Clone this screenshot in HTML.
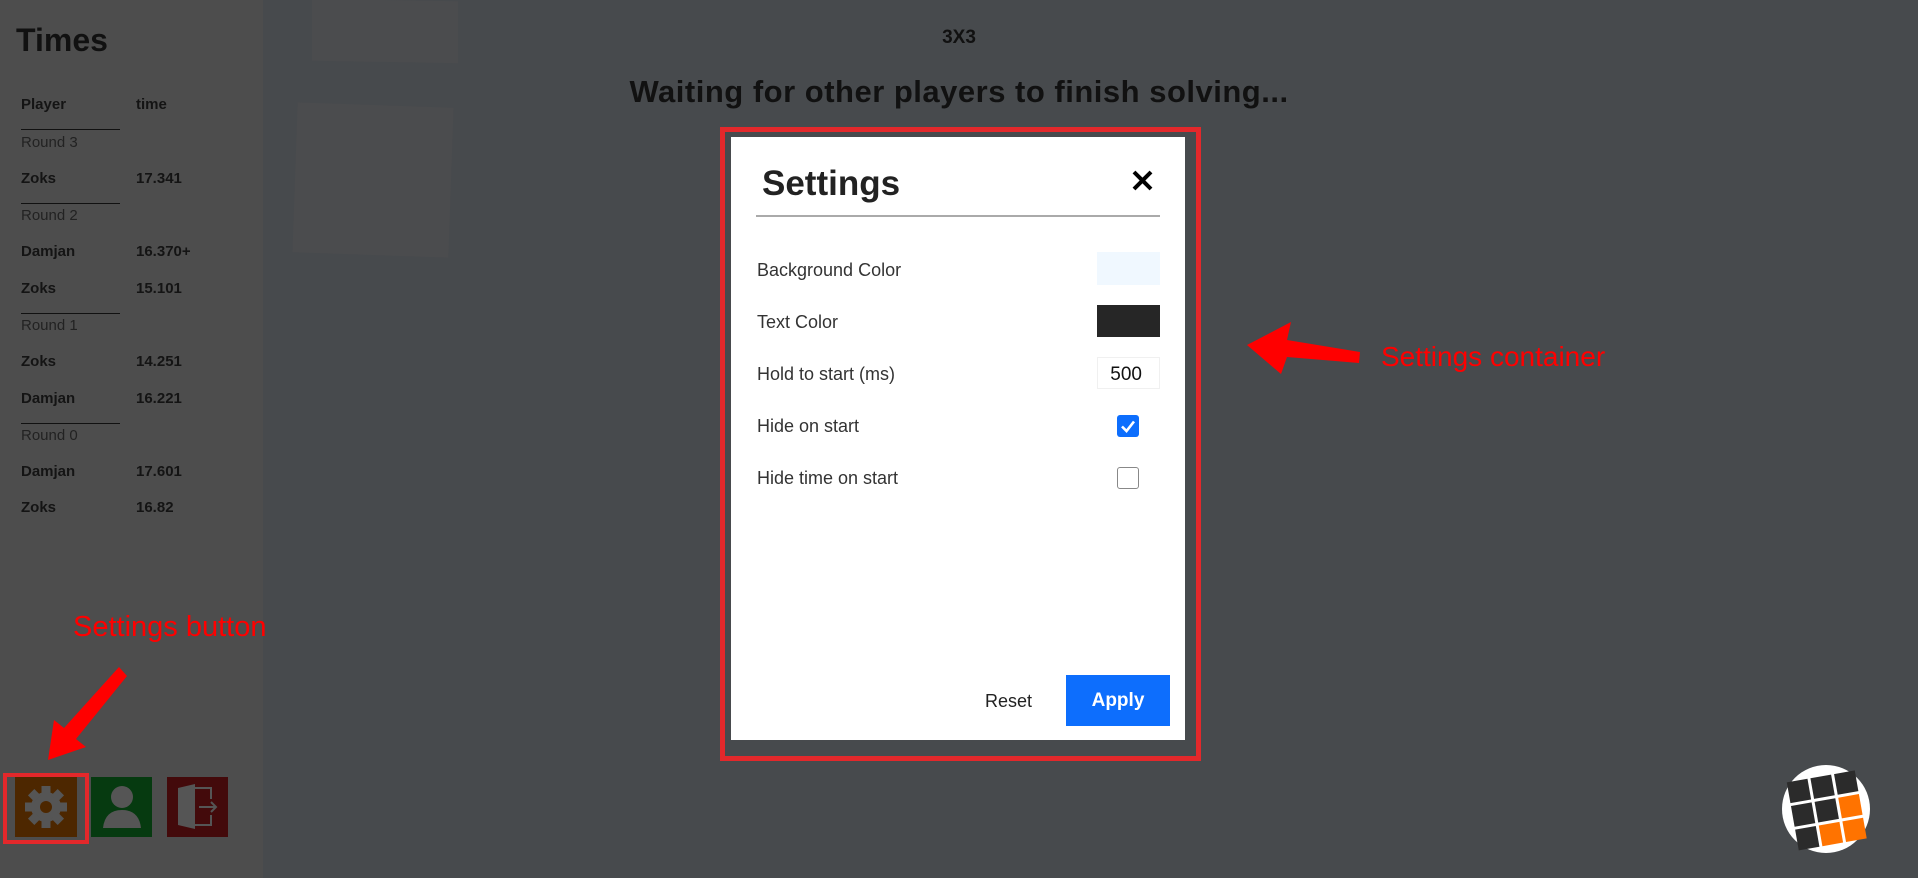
<!DOCTYPE html>
<html><head><meta charset="utf-8"><style>
*{margin:0;padding:0;box-sizing:border-box}
body{width:1918px;height:878px;overflow:hidden;background:#474a4d;font-family:"Liberation Sans","DejaVu Sans",sans-serif;position:relative}
.abs{position:absolute}
#left{left:0;top:0;width:263px;height:878px;background:#4d4d4d}
.t{position:absolute;font-size:15px;color:#141414;font-weight:bold}
.r{position:absolute;font-size:15px;color:#222;font-weight:normal}
.ln{position:absolute;left:21px;width:99px;height:1px;background:#111}
.lbl{position:absolute;left:757px;font-size:18px;color:#333}
</style></head><body>
<div class="abs" style="left:312px;top:0;width:146px;height:62px;background:#4b4c4e;transform:skewY(1deg)"></div>
<div class="abs" style="left:295px;top:105px;width:156px;height:150px;background:#4b4c4e;transform:rotate(2deg)"></div>
<div id="left" class="abs"></div>
<div class="abs" style="left:16px;top:22px;font-size:32px;font-weight:bold;color:#111">Times</div>
<div class="t" style="left:21px;top:96px">Player</div>
<div class="t" style="left:136px;top:96px">time</div>
<div class="ln" style="top:129px"></div>
<div class="r" style="left:21px;top:134px">Round 3</div>
<div class="t" style="left:21px;top:170px">Zoks</div><div class="t" style="left:136px;top:170px">17.341</div>
<div class="ln" style="top:203px"></div>
<div class="r" style="left:21px;top:207px">Round 2</div>
<div class="t" style="left:21px;top:243px">Damjan</div><div class="t" style="left:136px;top:243px">16.370+</div>
<div class="t" style="left:21px;top:280px">Zoks</div><div class="t" style="left:136px;top:280px">15.101</div>
<div class="ln" style="top:313px"></div>
<div class="r" style="left:21px;top:317px">Round 1</div>
<div class="t" style="left:21px;top:353px">Zoks</div><div class="t" style="left:136px;top:353px">14.251</div>
<div class="t" style="left:21px;top:390px">Damjan</div><div class="t" style="left:136px;top:390px">16.221</div>
<div class="ln" style="top:423px"></div>
<div class="r" style="left:21px;top:427px">Round 0</div>
<div class="t" style="left:21px;top:463px">Damjan</div><div class="t" style="left:136px;top:463px">17.601</div>
<div class="t" style="left:21px;top:499px">Zoks</div><div class="t" style="left:136px;top:499px">16.82</div>

<div class="abs" style="left:73px;top:611px;font-size:29px;color:#f00">Settings button</div>
<svg class="abs" style="left:0;top:0" width="1918" height="878">
<polygon points="127,676 119,667 64,728 54,720 48,760 86,747 76,739" fill="#f00"/>
<polygon points="1360,352 1359,363 1287,357 1281,374 1247,345 1291,322 1287,340" fill="#f00"/>
</svg>
<div class="abs" style="left:1381px;top:341px;font-size:28px;color:#f00">Settings container</div>

<div class="abs" style="left:15px;top:777px;width:62px;height:60px;background:#4d2700"></div>
<div class="abs" style="left:91px;top:777px;width:61px;height:60px;background:#063a10"></div>
<div class="abs" style="left:167px;top:777px;width:61px;height:60px;background:#430a0b"></div>
<div class="abs" style="left:3px;top:773px;width:86px;height:71px;border:4px solid #e3282b"></div>
<svg class="abs" style="left:15px;top:777px" width="62" height="60" viewBox="0 0 62 60">
<g fill="#555" transform="translate(31,30)">
<circle r="15"/>
<g id="tt"><rect x="-4.5" y="-21" width="9" height="9"/></g>
<use href="#tt" transform="rotate(45)"/><use href="#tt" transform="rotate(90)"/><use href="#tt" transform="rotate(135)"/><use href="#tt" transform="rotate(180)"/><use href="#tt" transform="rotate(225)"/><use href="#tt" transform="rotate(270)"/><use href="#tt" transform="rotate(315)"/>
<circle r="6" fill="#4d2700"/></g></svg>
<svg class="abs" style="left:91px;top:777px" width="61" height="60" viewBox="0 0 61 60">
<circle cx="31" cy="20" r="11" fill="#555"/><path d="M12 51 Q14 33 31 33 Q48 33 50 51 Z" fill="#555"/></svg>
<svg class="abs" style="left:167px;top:777px" width="61" height="60" viewBox="0 0 61 60">
<path d="M11 11 L28 7 L28 52 L11 48 Z" fill="#555"/><path d="M28 11 H44 V22 M44 38 V48 H28" fill="none" stroke="#555" stroke-width="2"/><path d="M32 30 H49 M44 25 L49 30 L44 35" fill="none" stroke="#555" stroke-width="2"/></svg>

<div class="abs" style="left:0;width:1918px;text-align:center;top:27px;font-size:19px;font-weight:bold;color:#111">3X3</div>
<div class="abs" style="left:0;width:1918px;text-align:center;top:74px;font-size:31px;font-weight:bold;color:#111;letter-spacing:0.5px">Waiting for other players to finish solving...</div>

<div class="abs" style="left:720px;top:127px;width:481px;height:634px;border:5px solid #e3282b"></div>
<div class="abs" style="left:731px;top:137px;width:454px;height:603px;background:#fff"></div>
<div class="abs" style="left:762px;top:164px;font-size:35px;font-weight:bold;color:#222">Settings</div>
<svg class="abs" style="left:1131px;top:169px" width="23" height="23"><path d="M3 3L20 20M20 3L3 20" stroke="#000" stroke-width="4"/></svg>
<div class="abs" style="left:756px;top:215px;width:404px;height:2px;background:#aaa"></div>
<div class="lbl" style="top:260px">Background Color</div>
<div class="lbl" style="top:312px">Text Color</div>
<div class="lbl" style="top:364px">Hold to start (ms)</div>
<div class="lbl" style="top:416px">Hide on start</div>
<div class="lbl" style="top:468px">Hide time on start</div>
<div class="abs" style="left:1097px;top:252px;width:63px;height:33px;background:#f0f8ff"></div>
<div class="abs" style="left:1097px;top:305px;width:63px;height:32px;background:#262626"></div>
<div class="abs" style="left:1097px;top:357px;width:63px;height:32px;border:1px solid #f0f0f0;font-size:19px;color:#111;text-align:right;padding:6px 17px 0 0">500</div>
<svg class="abs" style="left:1117px;top:415px" width="22" height="22"><rect width="22" height="22" rx="3" fill="#0d6efd"/><path d="M5 11.5L9.5 16L17 6.5" stroke="#fff" stroke-width="2.6" fill="none"/></svg>
<div class="abs" style="left:1117px;top:467px;width:22px;height:22px;border:1px solid #888;border-radius:3px"></div>
<div class="abs" style="left:985px;top:691px;font-size:18px;color:#222">Reset</div>
<div class="abs" style="left:1066px;top:675px;width:104px;height:51px;background:#0d6efd;color:#fff;font-size:19px;font-weight:bold;text-align:center;line-height:51px">Apply</div>

<svg class="abs" style="left:1780px;top:764px" width="92" height="92" viewBox="0 0 92 92">
<circle cx="46" cy="45" r="44" fill="#fff"/>
<g transform="rotate(-10 46 45)">
<rect x="12" y="12" width="21" height="21" fill="#2b2b2b"/><rect x="36" y="12" width="21" height="21" fill="#2b2b2b"/><rect x="60" y="12" width="21" height="21" fill="#2b2b2b"/>
<rect x="12" y="36" width="21" height="21" fill="#2b2b2b"/><rect x="36" y="36" width="21" height="21" fill="#2b2b2b"/><rect x="60" y="36" width="21" height="21" fill="#ff7300"/>
<rect x="12" y="60" width="21" height="21" fill="#2b2b2b"/><rect x="36" y="60" width="21" height="21" fill="#ff7300"/><rect x="60" y="60" width="21" height="21" fill="#ff7300"/>
</g></svg>
</body></html>
